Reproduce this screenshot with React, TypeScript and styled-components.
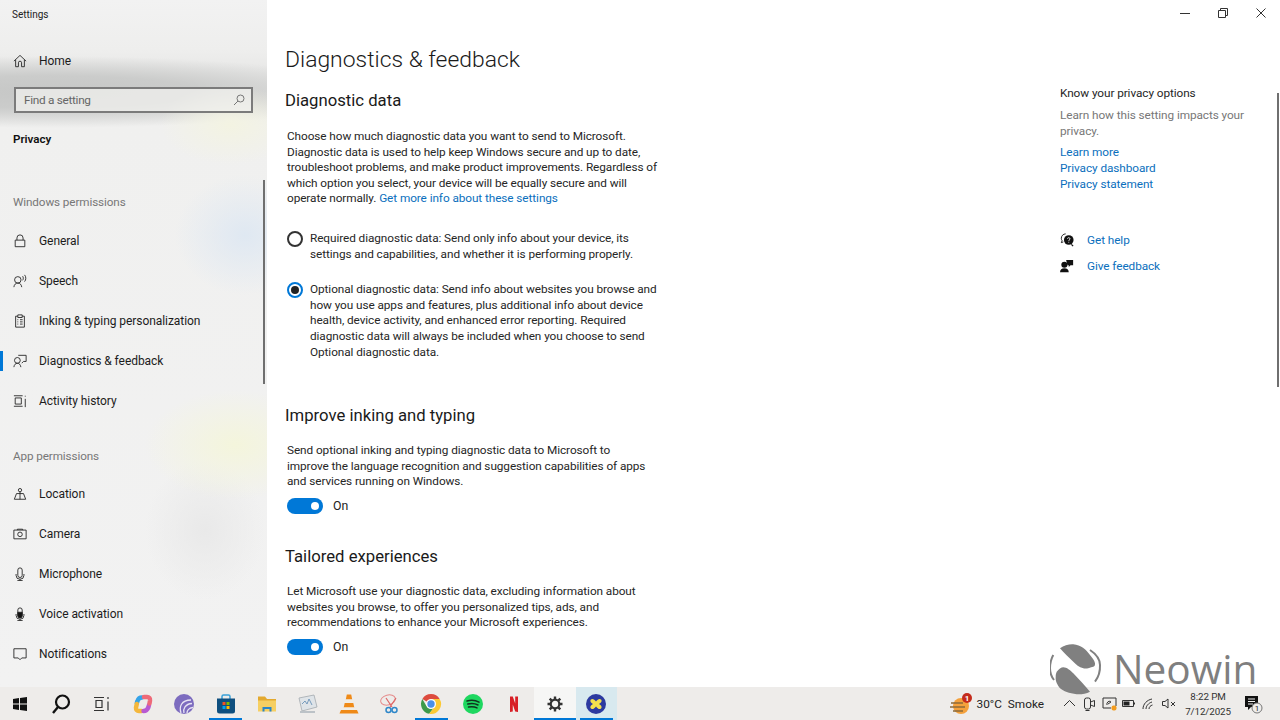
import styled, { createGlobalStyle } from 'styled-components';
import { ReactNode } from 'react';

const GlobalStyle = createGlobalStyle`
  html, body {
    margin: 0;
    padding: 0;
    width: 1280px;
    height: 720px;
    overflow: hidden;
    background: #fff;
    font-family: Roboto, "Noto Sans", sans-serif;
    color: #1a1a1a;
  }
`;

const Screen = styled.div`
  position: relative;
  width: 1280px;
  height: 720px;
  display: flex;
  flex-direction: column;
  overflow: hidden;
`;

const Main = styled.div`
  flex: 1;
  min-height: 0;
  display: flex;
`;

const Sidebar = styled.nav`
  position: relative;
  width: 267px;
  flex: none;
  overflow: hidden;
  background:
    radial-gradient(ellipse 70px 60px at 245px 235px, #dfe8f2 0%, rgba(223, 232, 242, 0) 100%),
    radial-gradient(ellipse 90px 55px at 235px 445px, #f4f5dc 0%, rgba(244, 245, 220, 0) 100%),
    radial-gradient(ellipse 70px 40px at 230px 125px, #f3f3e2 0%, rgba(243, 243, 226, 0) 100%),
    radial-gradient(ellipse 60px 70px at 205px 530px, #e9e9e9 0%, rgba(233, 233, 233, 0) 100%),
    radial-gradient(ellipse 330px 36px at 50px 92px, #c6c7c6 0%, #cbcccb 45%, rgba(203, 204, 203, 0) 100%),
    linear-gradient(180deg, #f2f2f2 0%, #eeeeed 50px, #e2e2e1 92px, #f0f0ef 125px, #f2f2f2 100%);
`;

const SidebarScroll = styled.div`
  position: absolute;
  left: 263px;
  top: 180px;
  width: 2px;
  height: 204px;
  background: #6f6f6f;
`;

const AppTitle = styled.div`
  height: 28px;
  padding-left: 12px;
  display: flex;
  align-items: center;
  font-size: 10px;
  color: #222;
`;

const NavRow = styled.div<{ $active?: boolean; $top?: number }>`
  position: relative;
  height: 40px;
  margin-top: ${(p) => p.$top ?? 0}px;
  display: flex;
  align-items: center;
  padding-left: 13px;
  gap: 12px;
  font-size: 12px;
  letter-spacing: -0.06px;
  color: #1c1c1c;

  svg {
    width: 14px;
    height: 14px;
    flex: none;
    fill: none;
    stroke: #222;
    stroke-width: 1;
  }

  ${(p) =>
    p.$active
      ? `&::before {
    content: '';
    position: absolute;
    left: 0;
    top: 10px;
    width: 3px;
    height: 20px;
    background: #0078d7;
  }`
      : ''}
`;

const Search = styled.div`
  height: 26px;
  margin: 6px 14px 0;
  width: 239px;
  box-sizing: border-box;
  border: 2px solid #7b7b7b;
  background: rgba(240, 240, 238, 0.75);
  display: flex;
  align-items: center;
  justify-content: space-between;
  padding: 0 6px 0 8px;
  font-size: 11.8px;
  letter-spacing: -0.3px;
  color: #666;

  svg {
    width: 12px;
    height: 12px;
    fill: none;
    stroke: #777;
    stroke-width: 1;
  }
`;

const SectionTitle = styled.div`
  height: 20px;
  margin: 16px 0 0 13px;
  display: flex;
  align-items: center;
  font-size: 11.6px;
  font-weight: 600;
  color: #111;
`;

const GroupLabel = styled.div<{ $top: number; $bottom: number }>`
  height: 20px;
  margin: ${(p) => p.$top}px 0 ${(p) => p.$bottom}px 13px;
  display: flex;
  align-items: center;
  font-size: 11.7px;
  letter-spacing: -0.1px;
  color: #777;
`;

const Content = styled.div`
  position: relative;
  flex: 1;
  min-width: 0;
  display: flex;
  flex-direction: column;
  background: #fff;
`;

const WindowBar = styled.div`
  height: 26px;
  margin-bottom: 2px;
  flex: none;
  display: flex;
  justify-content: flex-end;
`;

const WindowButton = styled.div`
  width: 38px;
  display: flex;
  align-items: center;
  justify-content: center;

  svg {
    width: 10px;
    height: 10px;
    fill: none;
    stroke: #333;
    stroke-width: 1;
  }
`;

const Columns = styled.div`
  flex: 1;
  display: flex;
`;

const Article = styled.main`
  width: 793px;
  box-sizing: border-box;
  flex: none;
  padding-left: 18px;
`;

const PageTitle = styled.h1`
  margin: 13px 0 0;
  height: 38px;
  font-size: 22.9px;
  line-height: 38px;
  font-weight: 300;
  color: #1a1a1a;
`;

const Heading = styled.h2<{ $top: number }>`
  margin: ${(p) => p.$top}px 0 0;
  height: 26px;
  line-height: 26px;
  font-size: 16.7px;
  font-weight: 400;
  color: #1a1a1a;
`;

const Body = styled.p<{ $top: number }>`
  margin: ${(p) => p.$top}px 0 0 2px;
  font-size: 11.8px;
  letter-spacing: -0.08px;
  line-height: 15.6px;
  color: #262626;
  white-space: nowrap;
`;

const Link = styled.a`
  color: #0b6fbd;
  text-decoration: none;
`;

const RadioRow = styled.div<{ $top: number }>`
  margin: ${(p) => p.$top}px 0 0 2px;
  display: flex;
  gap: 7px;
  align-items: flex-start;
`;

const Radio = styled.span<{ $checked?: boolean }>`
  width: 16px;
  height: 16px;
  flex: none;
  box-sizing: border-box;
  border-radius: 50%;
  border: 2px solid ${(p) => (p.$checked ? '#0078d7' : '#333')};
  display: flex;
  align-items: center;
  justify-content: center;

  &::after {
    content: '';
    display: ${(p) => (p.$checked ? 'block' : 'none')};
    width: 8px;
    height: 8px;
    border-radius: 50%;
    background: #222;
  }
`;

const RadioText = styled.div`
  padding-top: 0.5px;
  font-size: 11.8px;
  letter-spacing: -0.08px;
  line-height: 15.6px;
  color: #262626;
  white-space: nowrap;
`;

const ToggleRow = styled.div<{ $top: number }>`
  margin: ${(p) => p.$top}px 0 0 2px;
  display: flex;
  align-items: center;
  gap: 10px;
  font-size: 12.3px;
  color: #222;
`;

const ToggleTrack = styled.span`
  position: relative;
  width: 36px;
  height: 16px;
  border-radius: 8px;
  background: #0078d7;

  &::after {
    content: '';
    position: absolute;
    right: 4px;
    top: 4px;
    width: 8px;
    height: 8px;
    border-radius: 50%;
    background: #fff;
  }
`;

const Aside = styled.aside`
  width: 210px;
  padding-top: 57px;
  font-size: 11.8px;
  letter-spacing: -0.08px;
  line-height: 16px;
`;

const AsideTitle = styled.div`
  color: #262626;
  margin-bottom: 6px;
`;

const AsideMuted = styled.div`
  color: #777;
  margin-bottom: 5px;
`;

const AsideLink = styled(Link)`
  display: block;
`;

const HelpRow = styled.div<{ $top: number }>`
  margin-top: ${(p) => p.$top}px;
  height: 16px;
  display: flex;
  align-items: center;
  gap: 13px;

  svg {
    width: 14px;
    height: 14px;
    flex: none;
  }
`;

const ContentScroll = styled.div`
  position: absolute;
  right: 1px;
  top: 93px;
  width: 2px;
  height: 294px;
  background: #6f6f6f;
`;

const Taskbar = styled.footer`
  height: 33px;
  flex: none;
  display: flex;
  background: #eeecea;
`;

const TaskTabs = styled.div`
  display: flex;
  margin-left: -1px;
`;

const TaskTab = styled.div<{ $open?: boolean; $focused?: boolean; $bg?: string }>`
  position: relative;
  width: 41.2px;
  box-sizing: border-box;
  display: flex;
  align-items: center;
  justify-content: center;
  background: ${(p) => p.$bg ?? 'transparent'};

  svg {
    width: 22px;
    height: 22px;
  }

  &::after {
    content: '';
    display: ${(p) => (p.$open ? 'block' : 'none')};
    position: absolute;
    bottom: 0;
    left: ${(p) => (p.$focused ? 0 : 4)}px;
    right: ${(p) => (p.$focused ? 0 : 4)}px;
    height: 2px;
    background: #0078d7;
  }
`;

const Tray = styled.div`
  margin-left: auto;
  display: flex;
  align-items: center;
  font-size: 11.8px;
  color: #222;
`;

const Weather = styled.div`
  display: flex;
  align-items: center;
  gap: 4px;
  margin-right: 18px;
  white-space: pre;

  svg {
    width: 24px;
    height: 24px;
  }
`;

const TrayIcons = styled.div`
  display: flex;
  align-items: center;
  gap: 4.8px;

  svg {
    width: 15px;
    height: 15px;
    fill: none;
    stroke: #333;
    stroke-width: 1;
  }
`;

const Clock = styled.div`
  width: 62px;
  margin-left: 1px;
  text-align: center;
  font-size: 9.8px;
  letter-spacing: -0.1px;
  line-height: 15px;
  color: #333;
`;

const ActionCenter = styled.div`
  width: 28px;
  margin-right: 13px;
  display: flex;
  justify-content: center;

  svg {
    width: 20px;
    height: 20px;
  }
`;

const Watermark = styled.div`
  position: absolute;
  left: 1050px;
  top: 643px;
  display: flex;
  align-items: center;
  gap: 11px;
  color: #7f7f7f;
  font-family: "Open Sans", "Noto Sans", sans-serif;
  font-size: 40.6px;
  font-weight: 400;
  line-height: 36px;
  pointer-events: none;

  svg {
    width: 52px;
    height: 52px;
    flex: none;
  }
`;

const NavIcon = ({ children }: { children: ReactNode }) => <svg viewBox="0 0 16 16">{children}</svg>;

const navIcons: Record<string, ReactNode> = {
  home: <path d="M1 8.200 8 1.600l7 6.600M3 6.600V14.500h3.200V10a1.800 1.800 0 0 1 3.600 0v4.500H13V6.600" />,
  lock: <path d="M4.500 7V4.500a3.500 3.500 0 0 1 7 0V7M2.500 7h11v7.500h-11z" />,
  speech: (
    <path d="M1 15c.4-3 2-4.600 4.500-4.600S9.600 12 10 15M5.500 10.400a3.700 3.700 0 1 0 0-7.400 3.700 3.700 0 0 0 0 7.400ZM11 2.500c1 1.200 1 3.500 0 4.700M13.200 1c1.900 2 1.900 5.700 0 7.700" />
  ),
  clipboard: (
    <path d="M3 2.500h2.500V1h5v1.500H13V15H3zM5.500 2.500V4h5V2.500M5 6.500h1M8 6.500h3M5 9h1M8 9h3M5 11.500h1M8 11.500h3" />
  ),
  diagnostics: (
    <path d="M1 15c.4-2.800 1.800-4.400 4-4.400s3.600 1.600 4 4.400M5 10.600A3.300 3.300 0 1 0 5 4a3.300 3.300 0 0 0 0 6.600ZM6 1.500h9v7h-3l-2 2" />
  ),
  activity: <path d="M1 2h10M1 14h10M2.500 4.500h7v7h-7zM14 2v1M14 5.500V15" />,
  location: (
    <path d="M8 5.500a1.900 1.900 0 1 0 0-3.800 1.900 1.900 0 0 0 0 3.800ZM8 5.500V10M4 7.500h8L14.500 14h-13zM8 10v4" />
  ),
  camera: <path d="M1 3.500h14v10H1zM5 3.500V2.500h6v1M8 11a2.600 2.600 0 1 0 0-5.200A2.600 2.600 0 0 0 8 11Z" />,
  mic: <path d="M5.500 3.500a2.500 2.500 0 0 1 5 0v6a2.500 2.500 0 0 1-5 0zM3.500 8v1.500a4.500 4.500 0 0 0 9 0V8M8 14v1.500M5 15.500h6" />,
  voice: (
    <>
      <path d="M5.500 3.500a2.500 2.500 0 0 1 5 0v6a2.500 2.500 0 0 1-5 0zM3.500 8v1.500a4.500 4.500 0 0 0 9 0V8M8 14v1.500M5 15.500h6" />
      <path d="M5.500 6h5v4a2.500 2.500 0 0 1-5 0z" fill="#111" />
    </>
  ),
  bell: <path d="M1 2h14v10.500H10l-2 2-2-2H1z" />,
};

const topNav = [
  { label: 'General', icon: 'lock' },
  { label: 'Speech', icon: 'speech' },
  { label: 'Inking & typing personalization', icon: 'clipboard' },
  { label: 'Diagnostics & feedback', icon: 'diagnostics', active: true },
  { label: 'Activity history', icon: 'activity' },
];

const appNav = [
  { label: 'Location', icon: 'location' },
  { label: 'Camera', icon: 'camera' },
  { label: 'Microphone', icon: 'mic' },
  { label: 'Voice activation', icon: 'voice' },
  { label: 'Notifications', icon: 'bell' },
];

const taskIcons: { key: string; open?: boolean; focused?: boolean; bg?: string; icon: ReactNode }[] = [
  {
    key: 'start',
    icon: (
      <svg viewBox="0 0 22 22">
        <path d="M4 6l6-.9V10.500H4zM11 4.900l7-1V10.500h-7zM4 11.500h6v5.400l-6-.9zM11 11.500h7V18l-7-1z" fill="#111" />
      </svg>
    ),
  },
  {
    key: 'search',
    icon: (
      <svg viewBox="0 0 22 22">
        <circle cx="12.500" cy="9" r="6.500" fill="none" stroke="#111" strokeWidth="2.200" />
        <path d="M8 14 3 20" stroke="#111" strokeWidth="2.400" />
      </svg>
    ),
  },
  {
    key: 'tasks',
    icon: (
      <svg viewBox="0 0 22 22">
        <path d="M3 4.500h10M3 17.500h10M5 7.500h6v7H5zM17 4v2M17 8.500v9" fill="none" stroke="#333" strokeWidth="1.200" />
      </svg>
    ),
  },
  {
    key: 'copilot',
    icon: (
      <svg viewBox="0 0 22 22" fill="none" strokeWidth="4.500" strokeLinecap="round">
        <path d="M10 4.500Q6.500 4.500 5.500 8L4.800 10" stroke="#35a3e8" />
        <path d="M4.800 11 4 14.500Q3.800 18 7 18H9.500" stroke="#f4b73c" />
        <path d="M11.500 18Q15 18 16.300 14.500L17 12" stroke="#b85ad2" />
        <path d="M12 4H15Q18.300 4 18 7.500L17.500 10.500" stroke="#ee6a78" />
      </svg>
    ),
  },
  {
    key: 'tor',
    icon: (
      <svg viewBox="0 0 22 22">
        <circle cx="11" cy="11" r="10" fill="#7d6cbf" />
        <path d="M8 20c-2-6 0-13 10-13M11 20c-1-4 1-9 8-9.500M14 20c0-2 1.500-5 6-5.500" fill="none" stroke="#e8e4f4" strokeWidth="1.300" />
      </svg>
    ),
  },
  {
    key: 'store',
    open: true,
    icon: (
      <svg viewBox="0 0 22 22">
        <path d="M7 6V3.500A1.500 1.500 0 0 1 8.500 2h5A1.500 1.500 0 0 1 15 3.500V6" fill="none" stroke="#3aa0d8" strokeWidth="1.500" />
        <path d="M2 5.500h18V18a2.500 2.500 0 0 1-2.500 2.500h-13A2.500 2.500 0 0 1 2 18z" fill="#0f4f7f" />
        <path d="M7.500 9h3v3h-3z" fill="#f25022" />
        <path d="M11.500 9h3v3h-3z" fill="#7fba00" />
        <path d="M7.500 13h3v3h-3z" fill="#00a4ef" />
        <path d="M11.500 13h3v3h-3z" fill="#ffb900" />
      </svg>
    ),
  },
  {
    key: 'folder',
    icon: (
      <svg viewBox="0 0 22 22">
        <path d="M2 3.500h7l2 2.500h9v5H2z" fill="#e3a92f" />
        <path d="M2 7.500h18v11H2z" fill="#f6cf62" />
        <path d="M6.500 14h9v4.500h-2v-2.500h-5v2.500h-2z" fill="#2a86c9" />
      </svg>
    ),
  },
  {
    key: 'monitor',
    icon: (
      <svg viewBox="0 0 22 22">
        <path d="M2 5l15-3 3 12-15 4z" fill="#dfe4e8" stroke="#a3a9ae" strokeWidth="0.800" />
        <path d="M5 11l3-3 2 3 2-5 3 6" fill="none" stroke="#6b93b8" strokeWidth="0.900" />
        <path d="M3 18h15v2H3z" fill="#bcc2c7" />
      </svg>
    ),
  },
  {
    key: 'vlc',
    icon: (
      <svg viewBox="0 0 22 22">
        <path d="M8.800 1.500h4.400l1 5H7.800zM6.700 10h8.600l1 4.500H5.700z" fill="#ef8a18" />
        <path d="M7.800 6.500h6.400l1.100 3.500H6.700zM5.700 14.500h10.600l.7 2.500H5z" fill="#f1ede6" />
        <path d="M3 17h16l1.500 3.500h-19z" fill="#ef8a18" />
      </svg>
    ),
  },
  {
    key: 'snip',
    icon: (
      <svg viewBox="0 0 22 22">
        <ellipse cx="9" cy="7" rx="7.500" ry="5" fill="none" stroke="#e58a8a" strokeWidth="1" transform="rotate(-15 9 7)" />
        <path d="M7 5l6 9M17 5l-6 9" stroke="#d66" strokeWidth="1.200" />
        <circle cx="9.500" cy="17" r="2.500" fill="none" stroke="#2f87c9" strokeWidth="1.500" />
        <circle cx="15.500" cy="17" r="2.500" fill="none" stroke="#2f87c9" strokeWidth="1.500" />
      </svg>
    ),
  },
  {
    key: 'chrome',
    open: true,
    icon: (
      <svg viewBox="0 0 22 22">
        <path d="M11 1a10 10 0 0 1 8.660 5H11a5 5 0 0 0-4.330 2.500L2.340 6A10 10 0 0 1 11 1z" fill="#dd4b3e" />
        <path d="M2.340 6l4.330 7.500A5 5 0 0 0 13.500 15.330L9.170 20.830A10 10 0 0 1 2.340 6z" fill="#3c9a4a" />
        <path d="M19.660 6H11a5 5 0 0 1 2.500 9.330L9.170 20.830A10 10 0 0 0 19.660 6z" fill="#fcc934" />
        <circle cx="11" cy="11" r="4.800" fill="#fff" />
        <circle cx="11" cy="11" r="3.700" fill="#4a8fe7" />
      </svg>
    ),
  },
  {
    key: 'spotify',
    icon: (
      <svg viewBox="0 0 22 22">
        <circle cx="11" cy="11" r="10" fill="#1ed760" />
        <path d="M5 8c4-1 8.500-.8 12 1.200M5.800 11c3.500-.8 7.200-.6 10.200 1M6.500 14c3-.6 6-.4 8.500.9" fill="none" stroke="#10331e" strokeWidth="1.500" strokeLinecap="round" />
      </svg>
    ),
  },
  {
    key: 'netflix',
    icon: (
      <svg viewBox="0 0 22 22">
        <path d="M7 3.500h2.800l2.400 7V3.500H15v15.500l-2.800-.4-2.400-7v7L7 19z" fill="#d81f26" />
      </svg>
    ),
  },
  {
    key: 'settings',
    open: true,
    focused: true,
    bg: '#f6f6f5',
    icon: (
      <svg viewBox="0 0 22 22">
        <circle cx="11" cy="11" r="4.300" fill="none" stroke="#333" strokeWidth="2.200" />
        <path d="M11 3.500v3M11 15.500v3M3.500 11h3M15.500 11h3M5.700 5.700l2 2M14.300 14.300l2 2M16.300 5.700l-2 2M7.700 14.300l-2 2" stroke="#333" strokeWidth="2.400" />
      </svg>
    ),
  },
  {
    key: 'xampp',
    open: true,
    bg: '#d8e9ef',
    icon: (
      <svg viewBox="0 0 22 22">
        <circle cx="11" cy="11" r="10" fill="#2c3aa0" />
        <path d="M6 6.500c1.500-1.500 3.500 0 5 2 1.500-2 3.500-3.500 5-2s0 3.500-2 4.500c2 1 3.500 3 2 4.500s-3.500 0-5-2c-1.500 2-3.500 3.500-5 2s0-3.500 2-4.500c-2-1-3.500-3-2-4.500Z" fill="#f4e04d" />
      </svg>
    ),
  },
];

const NavList = ({ items }: { items: { label: string; icon: string; active?: boolean }[] }) => (
  <>
    {items.map((item) => (
      <NavRow key={item.label} $active={item.active}>
        <NavIcon>{navIcons[item.icon]}</NavIcon>
        {item.label}
      </NavRow>
    ))}
  </>
);

export default function App() {
  return (
    <Screen>
      <GlobalStyle />
      <Main>
        <Sidebar>
          <AppTitle>Settings</AppTitle>
          <NavRow $top={13}>
            <NavIcon>{navIcons.home}</NavIcon>
            Home
          </NavRow>
          <Search>
            Find a setting
            <svg viewBox="0 0 12 12">
              <circle cx="7.500" cy="4.500" r="3.500" />
              <path d="M5 7 1 11" />
            </svg>
          </Search>
          <SectionTitle>Privacy</SectionTitle>
          <GroupLabel $top={43} $bottom={9}>Windows permissions</GroupLabel>
          <NavList items={topNav} />
          <GroupLabel $top={25} $bottom={8}>App permissions</GroupLabel>
          <NavList items={appNav} />
          <SidebarScroll />
        </Sidebar>
        <Content>
          <WindowBar>
            <WindowButton>
              <svg viewBox="0 0 10 10"><path d="M0 5.500h10" /></svg>
            </WindowButton>
            <WindowButton>
              <svg viewBox="0 0 10 10"><path d="M.5 2.500h7v7h-7zM2.500 2.500V.5h7v7h-2" /></svg>
            </WindowButton>
            <WindowButton>
              <svg viewBox="0 0 10 10"><path d="M.5.5l9 9M9.500.5l-9 9" /></svg>
            </WindowButton>
          </WindowBar>
          <Columns>
            <Article>
              <PageTitle>Diagnostics &amp; feedback</PageTitle>
              <Heading $top={9}>Diagnostic data</Heading>
              <Body $top={15}>
                Choose how much diagnostic data you want to send to Microsoft.<br />
                Diagnostic data is used to help keep Windows secure and up to date,<br />
                troubleshoot problems, and make product improvements. Regardless of<br />
                which option you select, your device will be equally secure and will<br />
                operate normally. <Link>Get more info about these settings</Link>
              </Body>
              <RadioRow $top={24}>
                <Radio />
                <RadioText>
                  Required diagnostic data: Send only info about your device, its<br />
                  settings and capabilities, and whether it is performing properly.
                </RadioText>
              </RadioRow>
              <RadioRow $top={19}>
                <Radio $checked />
                <RadioText>
                  Optional diagnostic data: Send info about websites you browse and<br />
                  how you use apps and features, plus additional info about device<br />
                  health, device activity, and enhanced error reporting. Required<br />
                  diagnostic data will always be included when you choose to send<br />
                  Optional diagnostic data.
                </RadioText>
              </RadioRow>
              <Heading $top={43}>Improve inking and typing</Heading>
              <Body $top={14}>
                Send optional inking and typing diagnostic data to Microsoft to<br />
                improve the language recognition and suggestion capabilities of apps<br />
                and services running on Windows.
              </Body>
              <ToggleRow $top={8}>
                <ToggleTrack />
                On
              </ToggleRow>
              <Heading $top={30}>Tailored experiences</Heading>
              <Body $top={14}>
                Let Microsoft use your diagnostic data, excluding information about<br />
                websites you browse, to offer you personalized tips, ads, and<br />
                recommendations to enhance your Microsoft experiences.
              </Body>
              <ToggleRow $top={8}>
                <ToggleTrack />
                On
              </ToggleRow>
            </Article>
            <Aside>
              <AsideTitle>Know your privacy options</AsideTitle>
              <AsideMuted>
                Learn how this setting impacts your<br />
                privacy.
              </AsideMuted>
              <AsideLink>Learn more</AsideLink>
              <AsideLink>Privacy dashboard</AsideLink>
              <AsideLink>Privacy statement</AsideLink>
              <HelpRow $top={40}>
                <svg viewBox="0 0 16 16">
                  <path d="M6.500 1a5 5 0 0 0-5 5c0 1 .3 2 .9 2.800L1.500 11l2.300-.8" fill="none" stroke="#111" strokeWidth="1" />
                  <circle cx="10" cy="8" r="5.500" fill="#111" />
                  <path d="M13 13l2 2" stroke="#111" strokeWidth="1.500" />
                  <path d="M8.500 6.500C8.500 5 11.500 5 11.500 6.700c0 1-1.500 1-1.500 2.300M10 10v1" fill="none" stroke="#fff" strokeWidth="1" />
                </svg>
                <Link>Get help</Link>
              </HelpRow>
              <HelpRow $top={10}>
                <svg viewBox="0 0 16 16">
                  <circle cx="5" cy="6.500" r="3.500" fill="#111" />
                  <path d="M0 15c0-3 2-4.500 5-4.500s5 1.500 5 4.500z" fill="#111" />
                  <path d="M7 1h8v6h-3l-2 2V7H8.500z" fill="#111" />
                </svg>
                <Link>Give feedback</Link>
              </HelpRow>
            </Aside>
          </Columns>
          <ContentScroll />
        </Content>
      </Main>
      <Taskbar>
        <TaskTabs>
          {taskIcons.map((t) => (
            <TaskTab key={t.key} $open={t.open} $focused={t.focused} $bg={t.bg}>
              {t.icon}
            </TaskTab>
          ))}
        </TaskTabs>
        <Tray>
          <Weather>
            <svg viewBox="0 0 24 24">
              <circle cx="12" cy="14" r="8" fill="#f4a13c" />
              <path d="M2 11h12M1 15h15M4 19h10" stroke="#8a6a3a" strokeWidth="1.300" />
              <circle cx="18" cy="6" r="5" fill="#c42b1c" />
              <text x="18" y="9" fontSize="8" fontWeight="700" fill="#fff" textAnchor="middle">1</text>
            </svg>
            30°C  Smoke
          </Weather>
          <TrayIcons>
            <svg viewBox="0 0 15 15"><path d="M2 10l5.500-5.500L13 10" /></svg>
            <svg viewBox="0 0 15 15"><path d="M2.500 4a2 2 0 0 1 2-2h2a2 2 0 0 1 2 2v7a2 2 0 0 1-2 2h-2a2 2 0 0 1-2-2zM8.500 6l4-1.500v6l-4-1.500M3.500 14.500h4" /></svg>
            <svg viewBox="0 0 15 15">
              <path d="M1 2h13v8M1 2v10h8M5 9c-1-3 3-5 4-3L6 8" />
              <rect x="9.500" y="9.500" width="5" height="5" rx="2" fill="#f39c1f" stroke="none" />
            </svg>
            <svg viewBox="0 0 15 15">
              <path d="M1.500 4.500h11v6h-11zM13.500 6.500v2" />
              <path d="M2.500 5.500h6v4h-6z" fill="#222" stroke="none" />
            </svg>
            <svg viewBox="0 0 15 15"><path d="M2 13C2 8 6 4 11 3M5 13c0-3 2.500-6 6-7M8 13c0-2 1.500-3.500 3.500-4" /></svg>
            <svg viewBox="0 0 15 15"><path d="M1.500 5.500h2.500L7 3v9L4 9.500H1.500zM10 6l4 4M14 6l-4 4" /></svg>
          </TrayIcons>
          <Clock>
            8:22 PM<br />
            7/12/2025
          </Clock>
          <ActionCenter>
            <svg viewBox="0 0 20 20">
              <path d="M2 2h13v11H8l-3 3v-3H2z" fill="#111" />
              <path d="M5 5h7M5 7.500h7M5 10h5" stroke="#eee" strokeWidth="1" />
              <circle cx="14" cy="14" r="5" fill="#eeecea" stroke="#777" strokeWidth="1" />
              <text x="14" y="17" fontSize="8" fill="#222" textAnchor="middle">1</text>
            </svg>
          </ActionCenter>
        </Tray>
      </Taskbar>
      <Watermark>
        <svg viewBox="0 0 52 52" fill="#808080">
          <path d="M10 5.300C14 2.500 19 1 23.300 1.300 31 2 36 6.500 40 12c2.500 3 4.500 5.500 5 8.300.2 2-.5 3.200-1.700 3.400-3.500.7-7 2.500-10 1.600C29 24.300 26 21.500 23.300 18.700 19 14.500 14 10 10 5.300Z" />
          <path d="M6.700 28.700c2-2.500 4.500-4.400 6.600-4.400 3.500 0 7 3 10 6 5.500 6 11.500 12 16.700 18.400-4 2-8.500 2.900-13.300 2.600C19 50.500 13.500 48 10 45.300 7.500 42 5.200 38 5.700 33.700c0-2 .3-3.500 1-5Z" />
          <path d="M3.300 12C1 16 0 21 0 25.300c0 4 1.500 8.500 4 11.700" fill="none" stroke="#808080" strokeWidth="2" />
          <path d="M40 7c6 4 10 10 10 15 .3 6-1.500 12-5 16.700" fill="none" stroke="#808080" strokeWidth="2" />
        </svg>
        Neowin
      </Watermark>
    </Screen>
  );
}
